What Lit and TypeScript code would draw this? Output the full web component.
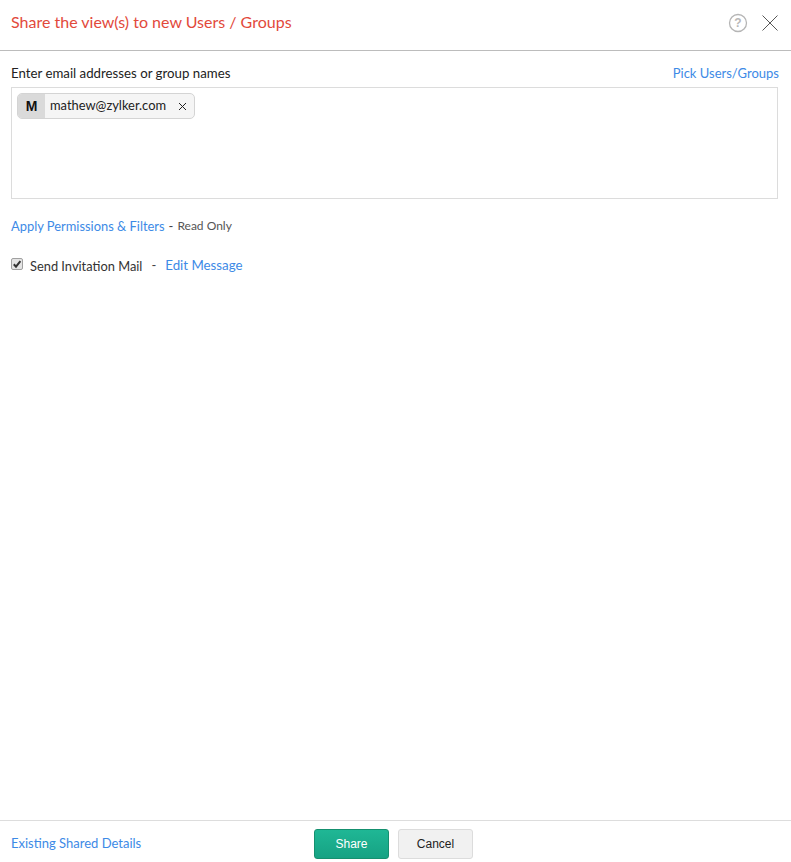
import { LitElement, html, css } from "lit";
import { customElement } from "lit/decorators.js";

@customElement("app-root")
export class AppRoot extends LitElement {
  static styles = css`
    :host {
      display: flex;
      flex-direction: column;
      height: 100vh;
      background: #fff;
      font-family: Lato, "Liberation Sans", Arial, sans-serif;
      font-size: 13px;
      color: #222;
      box-sizing: border-box;
      overflow: hidden;
    }
    .header {
      height: 51px;
      flex: none;
      box-sizing: border-box;
      display: flex;
      align-items: center;
      justify-content: space-between;
      padding: 0 13px 7px 11px;
      border-bottom: 1px solid #bcbcbc;
    }
    .title {
      font-size: 16px;
      color: #e2493b;
    }
    .tools {
      display: flex;
      align-items: center;
      gap: 14px;
      margin-top: 2px;
    }
    .tools svg {
      display: block;
    }
    .body {
      flex: 1;
      padding: 15px 13px 0 11px;
      min-height: 0;
    }
    .label-row {
      display: flex;
      justify-content: space-between;
      height: 21px;
      line-height: 15px;
      margin-right: -1px;
    }
    .label-row span {
      font-size: 13.25px;
    }
    a {
      color: #3d8ae6;
      text-decoration: none;
    }
    .box {
      height: 112px;
      box-sizing: border-box;
      border: 1px solid #dcdcdc;
      padding: 5px;
    }
    .chip {
      display: inline-flex;
      align-items: center;
      height: 26px;
      box-sizing: border-box;
      width: 178px;
      border: 1px solid #d4d4d4;
      border-radius: 5px;
      background: #f5f5f5;
      overflow: hidden;
    }
    .avatar {
      width: 27px;
      align-self: stretch;
      display: flex;
      align-items: center;
      justify-content: center;
      background: #dadada;
      font-family: "Liberation Sans", Arial, sans-serif;
      font-size: 14px;
      font-weight: 700;
      color: #111;
    }
    .email {
      margin-left: 5px;
      flex: 1;
      color: #222;
      font-size: 12.9px;
      line-height: 15px;
      margin-bottom: 2px;
    }
    .chip svg {
      display: block;
      margin-right: 7px;
    }
    .perm {
      display: flex;
      align-items: center;
      gap: 4px;
      margin-top: 18px;
      height: 17px;
    }
    .perm a {
      font-size: 12.9px;
    }
    .readonly {
      font-size: 12px;
      color: #555;
    }
    .dash {
      color: #444;
    }
    .invite {
      display: flex;
      align-items: center;
      margin-top: 22px;
      height: 17px;
    }
    .check {
      display: block;
      flex: none;
      position: relative;
      top: -1px;
    }
    .invite .text {
      margin-left: 7px;
      color: #333;
      font-size: 12.85px;
      position: relative;
      top: 1px;
    }
    .invite .dash {
      margin: 0 9px;
    }
    .invite a {
      font-size: 13.3px;
    }
    .footer {
      height: 42px;
      flex: none;
      box-sizing: border-box;
      border-top: 1px solid #dddddd;
      position: relative;
      display: flex;
      align-items: center;
      padding: 2px 11px 0;
    }
    .buttons {
      position: absolute;
      left: 314px;
      top: 8px;
      display: flex;
      gap: 9px;
    }
    button {
      font-family: "Liberation Sans", Arial, sans-serif;
      font-size: 12px;
      height: 30px;
      box-sizing: border-box;
      border-radius: 3px;
      padding: 0;
    }
    .share {
      width: 75px;
      color: #fff;
      border: 1px solid #15906f;
      background: linear-gradient(#1fb795, #16a283);
    }
    .cancel {
      width: 75px;
      color: #222;
      border: 1px solid #dcdcdc;
      background: #f1f1f1;
    }
  `;

  render() {
    return html`
      <div class="header">
        <div class="title">Share the view(s) to new Users / Groups</div>
        <div class="tools">
          <svg width="20" height="20" viewBox="0 0 20 20" fill="none">
            <circle cx="10" cy="10" r="8.5" stroke="#b5b5b5" stroke-width="1.3"></circle>
            <text x="10" y="14.2" text-anchor="middle" font-size="12" font-weight="700" font-family="Liberation Sans" fill="#b8b8b8">?</text>
          </svg>
          <svg width="16" height="16" viewBox="0 0 16 16" fill="none">
            <path d="M0.5 0.5L15.5 15.5M15.5 0.5L0.5 15.5" stroke="#444" stroke-width="0.9"></path>
          </svg>
        </div>
      </div>
      <div class="body">
        <div class="label-row">
          <span>Enter email addresses or group names</span>
          <a href="#">Pick Users/Groups</a>
        </div>
        <div class="box">
          <div class="chip">
            <span class="avatar">M</span>
            <span class="email">mathew@zylker.com</span>
            <svg width="9" height="9" viewBox="0 0 9 9" fill="none">
              <path d="M1 1L8 8M8 1L1 8" stroke="#222" stroke-width="1"></path>
            </svg>
          </div>
        </div>
        <div class="perm">
          <a href="#">Apply Permissions &amp; Filters</a>
          <span class="dash">-</span>
          <span class="readonly">Read Only</span>
        </div>
        <div class="invite">
          <svg class="check" width="12" height="12" viewBox="0 0 12 12">
            <rect x="0.5" y="0.5" width="11" height="11" rx="1.5" fill="#e4e4e4" stroke="#a0a0a0"></rect>
            <path d="M2.8 6.2L5 8.6L9.4 3.2" fill="none" stroke="#333" stroke-width="2"></path>
          </svg>
          <span class="text">Send Invitation Mail</span>
          <span class="dash">-</span>
          <a href="#">Edit Message</a>
        </div>
      </div>
      <div class="footer">
        <a href="#">Existing Shared Details</a>
        <div class="buttons">
          <button class="share">Share</button>
          <button class="cancel">Cancel</button>
        </div>
      </div>
    `;
  }
}
